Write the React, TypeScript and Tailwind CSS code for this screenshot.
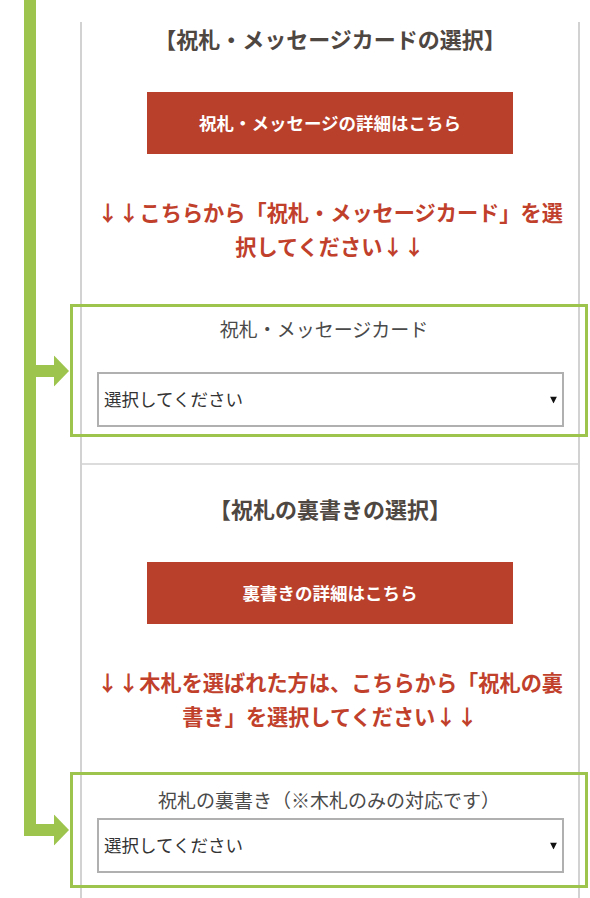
const GREEN = "bg-[#9dc44d]";

function Arrow() {
  return (
    <svg
      className="absolute left-[-37px] top-1/2 -translate-y-1/2"
      width="33"
      height="31"
      viewBox="0 0 33 31"
    >
      <rect x="0" y="9.5" width="19" height="12" fill="#9dc44d" />
      <polygon points="18,0 33,15.5 18,31" fill="#9dc44d" />
    </svg>
  );
}

function Caret() {
  return (
    <svg
      className="pointer-events-none absolute right-[7px] top-1/2 -translate-y-1/2"
      width="7"
      height="7"
      viewBox="0 0 7 7"
    >
      <polygon points="0,0 7,0 3.5,7" fill="#111" />
    </svg>
  );
}

function SelectBox({ className = "" }: { className?: string }) {
  return (
    <div className={`relative ml-[24px] h-[55px] w-[467px] ${className}`}>
      <select
        defaultValue=""
        className="h-full w-full appearance-none rounded-none border-2 border-[#b0b0b0] bg-white pl-[5px] text-[17.5px] text-[#333] outline-none"
      >
        <option value="">選択してください</option>
      </select>
      <Caret />
    </div>
  );
}

function SectionHead({ title, button, note }: { title: string; button: string; note: string }) {
  return (
    <>
      <h2 className="text-center text-[22px] font-bold leading-[32px] text-[#4e4641]">{title}</h2>
      <a
        href="#"
        className="mx-auto mt-[38px] flex h-[62px] w-[366px] items-center justify-center bg-[#b9412c] text-[17.5px] font-bold text-white"
      >
        {button}
      </a>
      <p className="mx-auto mt-[41px] w-[476px] text-center text-[21.2px] font-bold leading-[34px] text-[#c0402b]">
        {note}
      </p>
    </>
  );
}

export default function App() {
  return (
    <div className="flex h-[898px] w-[590px] overflow-hidden bg-white pl-[24px] font-['Noto_Sans_CJK_JP',sans-serif]">
      {/* flow line */}
      <div className={`h-[836px] w-[12px] shrink-0 self-start ${GREEN}`} />

      <div className="ml-[44px] mt-[22px] w-[500px] shrink-0 border-x-2 border-[#d2d2d2]">
        {/* message card */}
        <SectionHead
          title="【祝札・メッセージカードの選択】"
          button="祝札・メッセージの詳細はこちら"
          note="↓↓こちらから「祝札・メッセージカード」を選択してください↓↓"
        />
        <div className="relative ml-[-12px] mr-[-10px] mt-[41px] border-[3px] border-[#9dc44d] pb-[7px] pt-[8px]">
          <Arrow />
          <p className="pr-[10px] text-center text-[19px] leading-[28px] text-[#4a4a4a]">祝札・メッセージカード</p>
          <SelectBox className="mt-[29px]" />
        </div>

        <div className="mt-[26px] border-t-2 border-[#dcdcdc]" />

        {/* back text */}
        <div className="mt-[27px]">
          <SectionHead
            title="【祝札の裏書きの選択】"
            button="裏書きの詳細はこちら"
            note="↓↓木札を選ばれた方は、こちらから「祝札の裏書き」を選択してください↓↓"
          />
        </div>
        <div className="relative ml-[-12px] mr-[-10px] mt-[39px] border-[3px] border-[#9dc44d] pb-[12px] pt-[11px]">
          <Arrow />
          <p className="text-center text-[19px] leading-[28px] text-[#4a4a4a]">
            祝札の裏書き（※木札のみの対応です）
          </p>
          <SelectBox className="mt-[4px]" />
        </div>
      </div>
    </div>
  );
}
